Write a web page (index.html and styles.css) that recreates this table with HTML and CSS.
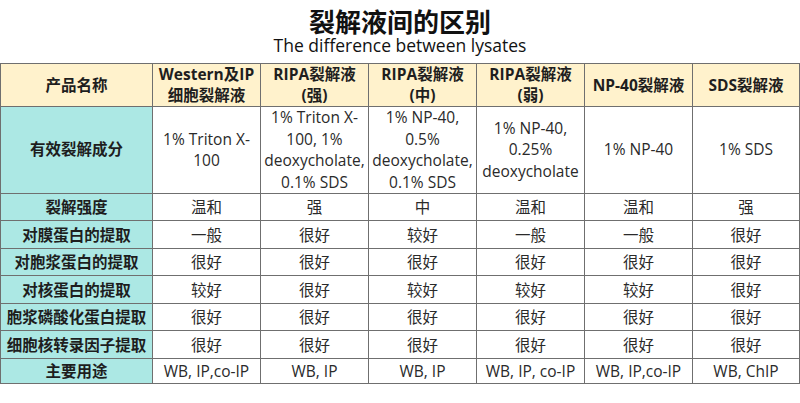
FILE: index.html
```html
<!DOCTYPE html>
<html lang="zh-CN">
<head>
<meta charset="utf-8">
<title>裂解液间的区别</title>
<link rel="stylesheet" href="styles.css">
</head>
<body>
<header class="heading">
  <h1 class="title">裂解液间的区别</h1>
  <p class="subtitle">The difference between lysates</p>
</header>
<table class="grid">
  <colgroup>
    <col class="c-label">
    <col class="c-val">
    <col class="c-val">
    <col class="c-val">
    <col class="c-val">
    <col class="c-val">
    <col class="c-last">
  </colgroup>
  <thead>
    <tr class="r-head">
      <th class="label">产品名称</th>
      <th>Western及IP<br>细胞裂解液</th>
      <th>RIPA裂解液<br>(强)</th>
      <th>RIPA裂解液<br>(中)</th>
      <th>RIPA裂解液<br>(弱)</th>
      <th>NP-40裂解液</th>
      <th>SDS裂解液</th>
    </tr>
  </thead>
  <tbody>
    <tr class="r-tall">
      <th class="label">有效裂解成分</th>
      <td>1% Triton X-<br>100</td>
      <td>1% Triton X-<br>100, 1%<br>deoxycholate,<br>0.1% SDS</td>
      <td>1% NP-40,<br>0.5%<br>deoxycholate,<br>0.1% SDS</td>
      <td>1% NP-40,<br>0.25%<br>deoxycholate</td>
      <td>1% NP-40</td>
      <td>1% SDS</td>
    </tr>
    <tr class="r-a">
      <th class="label">裂解强度</th>
      <td>温和</td><td>强</td><td>中</td><td>温和</td><td>温和</td><td>强</td>
    </tr>
    <tr class="r-b">
      <th class="label">对膜蛋白的提取</th>
      <td>一般</td><td>很好</td><td>较好</td><td>一般</td><td>一般</td><td>很好</td>
    </tr>
    <tr class="r-a">
      <th class="label">对胞浆蛋白的提取</th>
      <td>很好</td><td>很好</td><td>很好</td><td>很好</td><td>很好</td><td>很好</td>
    </tr>
    <tr class="r-b">
      <th class="label">对核蛋白的提取</th>
      <td>较好</td><td>很好</td><td>较好</td><td>较好</td><td>较好</td><td>很好</td>
    </tr>
    <tr class="r-a">
      <th class="label">胞浆磷酸化蛋白提取</th>
      <td>很好</td><td>很好</td><td>很好</td><td>很好</td><td>很好</td><td>很好</td>
    </tr>
    <tr class="r-b">
      <th class="label">细胞核转录因子提取</th>
      <td>很好</td><td>很好</td><td>很好</td><td>很好</td><td>很好</td><td>很好</td>
    </tr>
    <tr class="r-c">
      <th class="label">主要用途</th>
      <td>WB, IP,co-IP</td><td>WB, IP</td><td>WB, IP</td><td>WB, IP, co-IP</td><td>WB, IP,co-IP</td><td>WB, ChIP</td>
    </tr>
  </tbody>
</table>
</body>
</html>
```
FILE: styles.css
```css
html, body {
  margin: 0;
  padding: 0;
  background: #ffffff;
}
body {
  width: 800px;
  height: 403px;
  overflow: hidden;
  font-family: "Open Sans", "Noto Sans CJK SC", sans-serif;
  color: #222222;
}
.heading {
  height: 63px;
  text-align: center;
  color: #111111;
}
.title {
  margin: 0;
  padding-top: 7px;
  font-family: "Noto Sans CJK SC", sans-serif;
  font-size: 26px;
  font-weight: 700;
  line-height: 28px;
}
.subtitle {
  margin: 0;
  font-family: "Open Sans", "Noto Sans CJK SC", sans-serif;
  font-size: 17.5px;
  line-height: 20px;
}
.grid {
  border-collapse: collapse;
  table-layout: fixed;
  width: 800px;
}
.c-label { width: 152px; }
.c-val { width: 108px; }
.c-last { width: 107px; }
.grid th,
.grid td {
  border: 1px solid #6f6f6f;
  padding: 0 1px;
  text-align: center;
  vertical-align: middle;
  font-size: 15.5px;
  line-height: 21.5px;
}
.grid td {
  font-weight: 400;
  color: #2a2a2a;
}
.grid th {
  font-weight: 700;
  color: #1e1e1e;
}
.r-head th {
  background: #fff2cc;
  height: 42px;
  line-height: 21px;
}
.grid th.label {
  background: #ace8e4;
}
.r-head th.label {
  background: #fff2cc;
}
.r-tall td,
.r-tall th { height: 83px; }
.r-a td, .r-a th { height: 26px; line-height: 22px; }
.r-b td, .r-b th { height: 27px; line-height: 22px; }
.r-c td, .r-c th { height: 24px; line-height: 22px; }
```
